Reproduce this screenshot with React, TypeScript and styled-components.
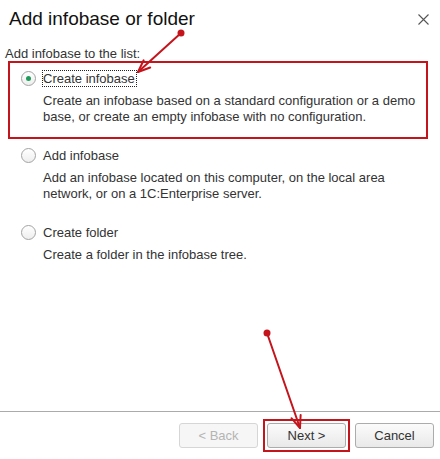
import React from 'react';
import styled, { createGlobalStyle } from 'styled-components';

const ANNOTATION_RED = '#c4141c';

const GlobalStyle = createGlobalStyle`
  html, body {
    margin: 0;
    padding: 0;
    background: #ffffff;
  }
  body {
    font-family: 'Liberation Sans', Arial, sans-serif;
  }
`;

const Dialog = styled.div`
  position: relative;
  width: 440px;
  height: 459px;
  display: flex;
  flex-direction: column;
  background: #ffffff;
  overflow: hidden;
`;

const Header = styled.div`
  height: 38px;
  display: flex;
  align-items: center;
  justify-content: space-between;
  padding: 0 10px 0 9px;
`;

const Title = styled.h1`
  margin: 0;
  font-size: 19px;
  font-weight: normal;
  line-height: 38px;
  color: #111111;
`;

const CloseButton = styled.button`
  width: 14px;
  height: 14px;
  padding: 0;
  border: 0;
  background: none;
  display: flex;
  align-items: center;
  justify-content: center;
  cursor: pointer;
`;

const Body = styled.div`
  flex: 1;
  display: flex;
  flex-direction: column;
`;

const ListLabel = styled.div`
  margin: 9px 0 0 5px;
  font-size: 13px;
  line-height: 14px;
  color: #333333;
`;

const Option = styled.div<{ $highlighted?: boolean }>`
  display: flex;
  flex-direction: column;
  gap: 6px;
  ${(p) =>
    p.$highlighted
      ? `
    margin: 0 12px 8px 8px;
    padding: 7px 0 12px 11px;
    border: 2px solid ${ANNOTATION_RED};
  `
      : `
    margin: 0 12px 22px 21px;
  `}
`;

const OptionRow = styled.label`
  display: flex;
  align-items: center;
  gap: 6px;
  height: 17px;
  cursor: pointer;
`;

const Radio = styled.span<{ $checked?: boolean }>`
  box-sizing: border-box;
  width: 15px;
  height: 15px;
  border-radius: 50%;
  border: 1px solid #a3a3a3;
  background: linear-gradient(#ffffff, #eeeeee);
  display: flex;
  align-items: center;
  justify-content: center;
  &::after {
    content: '';
    width: 5px;
    height: 5px;
    border-radius: 50%;
    background: ${(p) => (p.$checked ? '#1f9a5a' : 'transparent')};
  }
`;

const OptionTitle = styled.span<{ $focused?: boolean }>`
  font-size: 13px;
  line-height: 15px;
  color: #333333;
  border: 1px ${(p) => (p.$focused ? 'dotted #222222' : 'solid transparent')};
  padding: 0 1px 0 0;
`;

const Description = styled.p`
  margin: 0 0 0 22px;
  max-width: 380px;
  font-size: 13px;
  line-height: 16px;
  color: #333333;
`;

const Footer = styled.div`
  border-top: 1px solid #ababab;
  padding: 11px 6px 11px 0;
  display: flex;
  justify-content: flex-end;
  gap: 9px;
`;

// square red annotation frame drawn around a footer button
const MarkedSlot = styled.span`
  display: flex;
  outline: 2px solid ${ANNOTATION_RED};
  outline-offset: 2px;
`;

const Button = styled.button`
  box-sizing: border-box;
  width: 79px;
  height: 25px;
  border: 1px solid #acacac;
  border-radius: 3px;
  background: linear-gradient(#fbfbfb, #e9e9e9);
  font-family: 'Liberation Sans', Arial, sans-serif;
  font-size: 13px;
  color: #333333;
  padding: 0;
  cursor: pointer;
  &:disabled {
    border-color: #d6d6d6;
    background: #f6f6f6;
    color: #b4b4b4;
    cursor: default;
  }
`;

const Annotations = styled.svg`
  position: absolute;
  left: 0;
  top: 0;
  width: 440px;
  height: 459px;
  pointer-events: none;
`;

type Point = [number, number];

const Arrow = ({ from, to }: { from: Point; to: Point }) => {
  const back = Math.atan2(from[1] - to[1], from[0] - to[0]);
  const spread = (22 * Math.PI) / 180;
  const len = 13;
  const wing = (a: number): Point => [to[0] + Math.cos(a) * len, to[1] + Math.sin(a) * len];
  const w1 = wing(back - spread);
  const w2 = wing(back + spread);
  return (
    <g stroke={ANNOTATION_RED} strokeWidth={2} fill="none" strokeLinecap="round">
      <circle cx={from[0]} cy={from[1]} r={3.5} fill={ANNOTATION_RED} stroke="none" />
      <line x1={from[0]} y1={from[1]} x2={to[0]} y2={to[1]} />
      <polyline points={`${w1[0]},${w1[1]} ${to[0]},${to[1]} ${w2[0]},${w2[1]}`} strokeLinejoin="round" />
    </g>
  );
};

const options = [
  {
    title: 'Create infobase',
    text: 'Create an infobase based on a standard configuration or a demo base, or create an empty infobase with no configuration.',
  },
  {
    title: 'Add infobase',
    text: 'Add an infobase located on this computer, on the local area network, or on a 1C:Enterprise server.',
  },
  {
    title: 'Create folder',
    text: 'Create a folder in the infobase tree.',
  },
];

export default function App() {
  const selected = 0;
  return (
    <Dialog>
      <GlobalStyle />
      <Header>
        <Title>Add infobase or folder</Title>
        <CloseButton aria-label="Close">
          <svg width="11" height="11" viewBox="0 0 11 11">
            <path d="M0.5 0.5 L10.5 10.5 M10.5 0.5 L0.5 10.5" stroke="#555555" strokeWidth="1.1" />
          </svg>
        </CloseButton>
      </Header>
      <Body>
        <ListLabel>Add infobase to the list:</ListLabel>
        {options.map((o, i) => (
          <Option key={o.title} $highlighted={i === selected}>
            <OptionRow>
              <Radio $checked={i === selected} />
              <OptionTitle $focused={i === selected}>{o.title}</OptionTitle>
            </OptionRow>
            <Description>{o.text}</Description>
          </Option>
        ))}
      </Body>
      <Footer>
        <Button disabled>&lt; Back</Button>
        <MarkedSlot>
          <Button>Next &gt;</Button>
        </MarkedSlot>
        <Button>Cancel</Button>
      </Footer>
      <Annotations viewBox="0 0 440 459">
        <Arrow from={[181, 33]} to={[138, 72]} />
        <Arrow from={[267, 333]} to={[300, 428]} />
      </Annotations>
    </Dialog>
  );
}
